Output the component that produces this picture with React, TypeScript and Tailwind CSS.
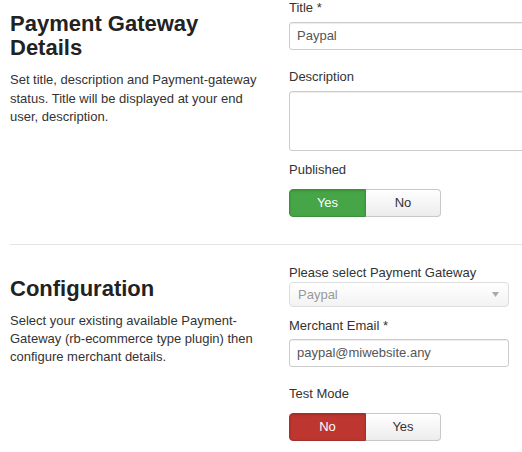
import React from "react";

function Toggle({ first, second, color }: { first: string; second: string; color: "green" | "red" }) {
  const active =
    color === "green"
      ? "bg-[#46a546] border-[#3d8f3d] text-white"
      : "bg-[#bd362f] border-[#a3302a] text-white";
  return (
    <div className="flex h-[28px] w-[152px] text-[13px]">
      <div className={`flex w-[77px] items-center justify-center rounded-l-[4px] border ${active} shadow-[inset_0_1px_2px_rgba(0,0,0,0.15)]`}>
        {first}
      </div>
      <div className="flex w-[75px] items-center justify-center rounded-r-[4px] border border-l-0 border-[#c8c8c8] bg-gradient-to-b from-white to-[#ececec] text-[#333]">
        {second}
      </div>
    </div>
  );
}

export default function App() {
  return (
    <div className="h-[452px] w-[522px] overflow-hidden bg-white font-['Liberation_Sans',Arial,sans-serif] text-[#333]">
      <section className="grid grid-cols-[262px_1fr] gap-x-[17px] pl-[10px]">
        <div className="pt-[12px]">
          <h2 className="text-[22px] font-bold leading-[24px] text-[#222]">Payment Gateway Details</h2>
          <p className="mt-[11px] text-[13px] leading-[18.5px]">
            Set title, description and Payment-gateway status. Title will be displayed at your end user, description.
          </p>
        </div>
        <div className="flex flex-col items-start">
          <label className="text-[13px] leading-[16px]">Title *</label>
          <div className="mt-[6px] flex h-[28px] w-[260px] items-center rounded-[3px] border border-[#ccc] px-[7px] text-[13px] text-[#555] shadow-[inset_0_1px_1px_rgba(0,0,0,0.075)]">
            Paypal
          </div>
          <label className="mt-[19px] text-[13px] leading-[16px]">Description</label>
          <div className="mt-[6px] h-[60px] w-[260px] rounded-[3px] border border-[#ccc] shadow-[inset_0_1px_1px_rgba(0,0,0,0.075)]" />
          <label className="mt-[11px] text-[13px] leading-[16px]">Published</label>
          <div className="mt-[11px]">
            <Toggle first="Yes" second="No" color="green" />
          </div>
        </div>
      </section>

      <div className="ml-[10px] mt-[27px] border-t border-[#e3e3e3]" />

      <section className="grid grid-cols-[262px_1fr] gap-x-[17px] pl-[10px]">
        <div className="pt-[32px]">
          <h2 className="text-[22px] font-bold leading-[24px] text-[#222]">Configuration</h2>
          <p className="mt-[11px] text-[13px] leading-[18px]">
            Select your existing available Payment-Gateway (rb-ecommerce type plugin) then configure merchant details.
          </p>
        </div>
        <div className="flex flex-col items-start pt-[20px]">
          <label className="text-[13px] leading-[16px]">Please select Payment Gateway</label>
          <div className="mt-[1px] flex h-[25px] w-[220px] items-center justify-between rounded-[4px] border border-[#ddd] bg-gradient-to-b from-white to-[#f3f3f3] pl-[8px] pr-[9px] text-[13px] text-[#999]">
            <span>Paypal</span>
            <svg width="7" height="5" viewBox="0 0 7 5">
              <path d="M0 0 L7 0 L3.5 5 Z" fill="#aaa" />
            </svg>
          </div>
          <label className="mt-[11px] text-[13px] leading-[16px]">Merchant Email *</label>
          <div className="mt-[5px] flex h-[28px] w-[220px] items-center rounded-[3px] border border-[#ccc] px-[7px] text-[13px] text-[#555] shadow-[inset_0_1px_1px_rgba(0,0,0,0.075)]">
            paypal@miwebsite.any
          </div>
          <label className="mt-[19px] text-[13px] leading-[16px]">Test Mode</label>
          <div className="mt-[11px]">
            <Toggle first="No" second="Yes" color="red" />
          </div>
        </div>
      </section>
    </div>
  );
}
